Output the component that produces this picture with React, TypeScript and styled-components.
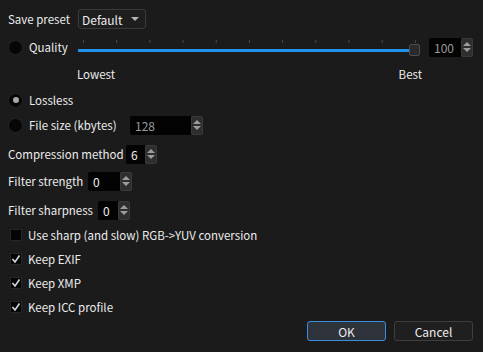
import React from 'react';
import styled, { createGlobalStyle } from 'styled-components';

const GlobalStyle = createGlobalStyle`
  html, body {
    margin: 0;
    padding: 0;
    background: #1b1b1b;
  }
  body {
    font-family: "Noto Sans CJK JP", "DejaVu Sans", sans-serif;
    font-size: 11.5px;
    color: #ececec;
  }
`;

const Dialog = styled.div`
  width: 483px;
  height: 352px;
  box-sizing: border-box;
  padding: 9px 10px 0 8px;
  display: flex;
  flex-direction: column;
  background: #1b1b1b;
`;

const Row = styled.div<{ $h: number; $top: number }>`
  display: flex;
  align-items: center;
  height: ${(p) => p.$h}px;
  margin-top: ${(p) => p.$top}px;
  white-space: nowrap;
`;

const Label = styled.span<{ $w?: number }>`
  line-height: 14px;
  width: ${(p) => (p.$w ? `${p.$w}px` : 'auto')};
  flex-shrink: 0;
`;

const Select = styled.div`
  display: flex;
  align-items: center;
  justify-content: space-between;
  box-sizing: border-box;
  width: 68px;
  height: 20px;
  margin-left: 9px;
  padding: 0 6px 0 3px;
  font-size: 12px;
  background: #1e1e1e;
  border: 1px solid #3a3a3a;
  border-radius: 3px;
`;

const Caret = styled.span`
  width: 0;
  height: 0;
  border-left: 4px solid transparent;
  border-right: 4px solid transparent;
  border-top: 4px solid #b4b4b4;
`;

const Radio = styled.span<{ $checked?: boolean }>`
  position: relative;
  display: inline-block;
  flex-shrink: 0;
  width: 13px;
  height: 13px;
  margin: 0 7px 0 1px;
  border-radius: 50%;
  background: #060606;
  box-shadow: 0 0 0 1px #222;
  &::after {
    content: '';
    display: ${(p) => (p.$checked ? 'block' : 'none')};
    position: absolute;
    left: 3.5px;
    top: 3.5px;
    width: 6px;
    height: 6px;
    border-radius: 50%;
    background: #a8a8a8;
  }
`;

const Check = styled.span`
  display: inline-flex;
  align-items: center;
  justify-content: center;
  flex-shrink: 0;
  width: 12px;
  height: 12px;
  margin: 0 6px 0 2px;
  background: #050505;
  border: 1px solid #262626;
  box-sizing: border-box;
`;

const SliderWrap = styled.div`
  position: relative;
  flex: 1;
  height: 20px;
  margin: 0 9px 0 0;
`;

const Ticks = styled.div`
  position: absolute;
  left: 0;
  right: 0;
  top: 3px;
  height: 3px;
  background-image: linear-gradient(to right, #4a4a4a 1px, transparent 1px);
  background-size: 33.2px 3px;
  background-position: 5px 0;
`;

const Track = styled.div`
  position: absolute;
  left: 0;
  right: 8px;
  top: 12px;
  height: 3px;
  background: #2192ea;
`;

const Handle = styled.div`
  position: absolute;
  right: 0;
  top: 7px;
  width: 11px;
  height: 12px;
  box-sizing: border-box;
  background: #2a2a2a;
  border: 1px solid #4e4e4e;
  border-radius: 2px;
`;

const Spin = styled.div<{ $w: number }>`
  display: flex;
  box-sizing: border-box;
  flex-shrink: 0;
  width: ${(p) => p.$w}px;
  height: 19px;
`;

const SpinField = styled.div<{ $dim?: boolean }>`
  flex: 1;
  display: flex;
  align-items: center;
  padding-left: 5px;
  font-size: 12px;
  background: #030303;
  color: ${(p) => (p.$dim ? '#9a9a9a' : '#f0f0f0')};
  border-radius: 2px 0 0 2px;
`;

const SpinArrows = styled.div`
  width: 12px;
  display: flex;
  flex-direction: column;
  align-items: center;
  justify-content: center;
  gap: 2px;
  background: #2e2e2e;
  border: 1px solid #3a3a3a;
  border-radius: 2px;
  box-sizing: border-box;
`;

const Up = styled.span`
  width: 0;
  height: 0;
  border-left: 4px solid transparent;
  border-right: 4px solid transparent;
  border-bottom: 4px solid #9c9c9c;
`;

const Down = styled(Up)`
  border-bottom: none;
  border-top: 4px solid #9c9c9c;
`;

const ScaleLabels = styled.div`
  display: flex;
  justify-content: space-between;
  width: 345px;
  margin-left: 69px;
`;

const Footer = styled.div`
  display: flex;
  justify-content: flex-end;
  gap: 8px;
  margin-top: 6px;
`;

const Button = styled.button<{ $primary?: boolean }>`
  width: 79px;
  height: 20px;
  padding: 0;
  font-family: inherit;
  font-size: 12px;
  color: #ececec;
  border-radius: 3px;
  background: ${(p) => (p.$primary ? '#2d323b' : '#1f1f1f')};
  border: 1px solid ${(p) => (p.$primary ? '#3b8ede' : '#3e3e3e')};
`;

const SpinBox = ({ value, w, dim }: { value: string; w: number; dim?: boolean }) => (
  <Spin $w={w}>
    <SpinField $dim={dim}>{value}</SpinField>
    <SpinArrows>
      <Up />
      <Down />
    </SpinArrows>
  </Spin>
);

const Tick = () => (
  <svg width="10" height="10" viewBox="0 0 10 10">
    <path d="M1.5 5 L4 8 L8.5 1.5" stroke="#d8d8d8" strokeWidth="1.6" fill="none" />
  </svg>
);

export default function App() {
  return (
    <>
      <GlobalStyle />
      <Dialog>
        <Row $h={20} $top={0}>
          <Label $w={61}>Save preset</Label>
          <Select>
            <span>Default</span>
            <Caret />
          </Select>
        </Row>
        <Row $h={20} $top={8}>
          <Radio />
          <Label $w={49}>Quality</Label>
          <SliderWrap>
            <Ticks />
            <Track />
            <Handle />
          </SliderWrap>
          <SpinBox value="100" w={44} dim />
        </Row>
        <Row $h={14} $top={10}>
          <ScaleLabels>
            <Label>Lowest</Label>
            <Label>Best</Label>
          </ScaleLabels>
        </Row>
        <Row $h={16} $top={11}>
          <Radio $checked />
          <Label>Lossless</Label>
        </Row>
        <Row $h={18} $top={8}>
          <Radio />
          <Label $w={101}>File size (kbytes)</Label>
          <SpinBox value="128" w={73} dim />
        </Row>
        <Row $h={18} $top={11}>
          <Label $w={118}>Compression method</Label>
          <SpinBox value="6" w={31} />
        </Row>
        <Row $h={18} $top={9}>
          <Label $w={80}>Filter strength</Label>
          <SpinBox value="0" w={44} />
        </Row>
        <Row $h={18} $top={11}>
          <Label $w={90}>Filter sharpness</Label>
          <SpinBox value="0" w={32} />
        </Row>
        <Row $h={16} $top={8}>
          <Check />
          <Label>Use sharp (and slow) RGB-&gt;YUV conversion</Label>
        </Row>
        <Row $h={16} $top={8}>
          <Check><Tick /></Check>
          <Label>Keep EXIF</Label>
        </Row>
        <Row $h={16} $top={8}>
          <Check><Tick /></Check>
          <Label>Keep XMP</Label>
        </Row>
        <Row $h={16} $top={8}>
          <Check><Tick /></Check>
          <Label>Keep ICC profile</Label>
        </Row>
        <Footer>
          <Button $primary>OK</Button>
          <Button>Cancel</Button>
        </Footer>
      </Dialog>
    </>
  );
}
